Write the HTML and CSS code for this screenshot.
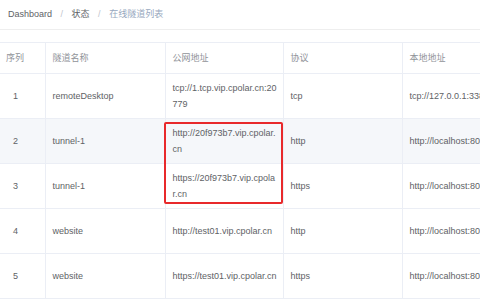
FILE: index.html
```html
<!DOCTYPE html>
<html lang="zh-CN">
<head>
    <meta charset="UTF-8">
    <title>在线隧道列表</title>
    <link rel="stylesheet" href="styles.css">
</head>
<body>
    <div class="navbar">
        <span class="crumb">Dashboard</span>
        <span class="sep">/</span>
        <span class="crumb">状态</span>
        <span class="sep">/</span>
        <span class="crumb current">在线隧道列表</span>
    </div>

    <div class="app-main">
        <div class="table-wrap">
            <table class="tunnel-table">
                <colgroup>
                    <col class="col-index">
                    <col class="col-name">
                    <col class="col-public">
                    <col class="col-proto">
                    <col class="col-local">
                </colgroup>
                <thead>
                    <tr>
                        <th class="index">序列</th>
                        <th>隧道名称</th>
                        <th>公网地址</th>
                        <th>协议</th>
                        <th>本地地址</th>
                    </tr>
                </thead>
                <tbody>
                    <tr>
                        <td class="index">1</td>
                        <td>remoteDesktop</td>
                        <td class="addr">tcp://1.tcp.vip.cpolar.cn:20<br>779</td>
                        <td>tcp</td>
                        <td class="addr">tcp://127.0.0.1:3389</td>
                    </tr>
                    <tr class="hover">
                        <td class="index">2</td>
                        <td>tunnel-1</td>
                        <td class="addr">http://20f973b7.vip.cpolar.<br>cn</td>
                        <td>http</td>
                        <td class="addr">http://localhost:8080</td>
                    </tr>
                    <tr>
                        <td class="index">3</td>
                        <td>tunnel-1</td>
                        <td class="addr">https://20f973b7.vip.cpola<br>r.cn</td>
                        <td>https</td>
                        <td class="addr">http://localhost:8080</td>
                    </tr>
                    <tr>
                        <td class="index">4</td>
                        <td>website</td>
                        <td class="addr">http://test01.vip.cpolar.cn</td>
                        <td>http</td>
                        <td class="addr">http://localhost:80</td>
                    </tr>
                    <tr>
                        <td class="index">5</td>
                        <td>website</td>
                        <td class="addr">https://test01.vip.cpolar.cn</td>
                        <td>https</td>
                        <td class="addr">http://localhost:80</td>
                    </tr>
                </tbody>
            </table>
            <!-- annotation box over the public address cells -->
            <div class="highlight"></div>
        </div>
    </div>
</body>
</html>
```

FILE: styles.css
```css
body {
    margin: 0;
    font-family: "Liberation Sans", "Noto Sans CJK SC", sans-serif;
    font-size: 9px;
    color: #606266;
    background: #fff;
    overflow: hidden;
}
.navbar {
    height: 29px;
    line-height: 29px;
    padding-left: 8px;
    border-bottom: 1px solid #eeeeee;
}
.crumb {
    color: #606266;
}
.crumb.current {
    color: #97a8be;
}
.sep {
    color: #c0c4cc;
    margin: 0 6px;
}
.app-main {
    padding-top: 12px;
}
.table-wrap {
    position: relative;
}
.tunnel-table {
    border-collapse: collapse;
    table-layout: fixed;
    width: 560px;
    margin-left: -1px;
    border-top: 1px solid #ebeef5;
}
.col-index { width: 46px; }
.col-name { width: 120px; }
.col-public { width: 118px; }
.col-proto { width: 119px; }
.col-local { width: 157px; }
.tunnel-table th,
.tunnel-table td {
    text-align: left;
    font-weight: normal;
    line-height: 16px;
    padding: 0 5px 0 7px;
    border-right: 1px solid #ebeef5;
    border-bottom: 1px solid #ebeef5;
    vertical-align: middle;
}
.tunnel-table th {
    color: #909399;
    height: 30px;
}
.tunnel-table td {
    height: 44px;
}
.tunnel-table td.index {
    padding-left: 14px;
}
.tunnel-table td.addr {
    white-space: nowrap;
    overflow: hidden;
}
.tunnel-table tr.hover td {
    background: #f5f7fa;
}
.highlight {
    position: absolute;
    left: 164px;
    top: 80px;
    width: 119px;
    height: 82px;
    box-sizing: border-box;
    border: 2px solid #e8292b;
    border-radius: 2px;
}
```
